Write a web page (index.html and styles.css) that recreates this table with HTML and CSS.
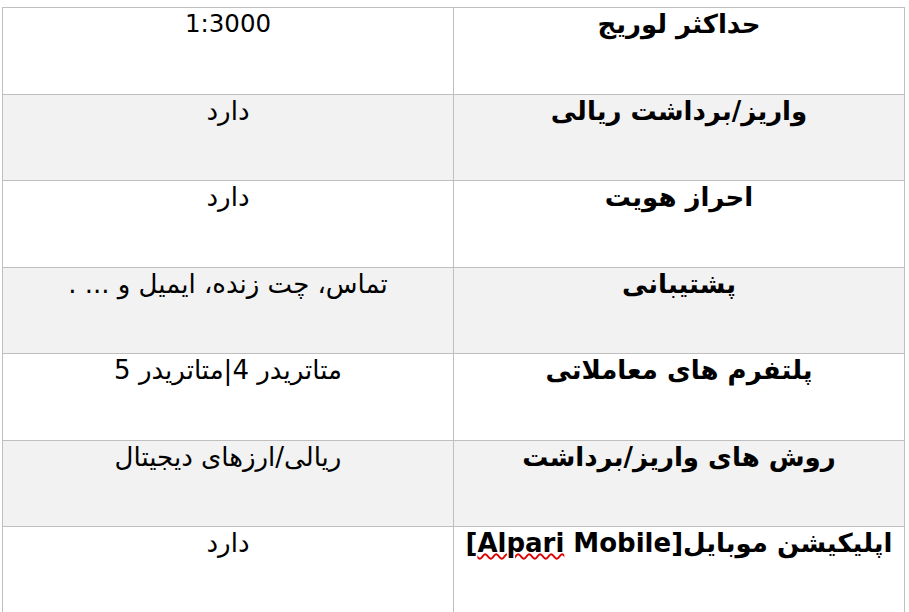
FILE: index.html
```html
<!DOCTYPE html>
<html lang="fa" dir="rtl">
<head>
<meta charset="utf-8">
<link rel="stylesheet" href="styles.css">
</head>
<body>
<table class="spec">
<tbody>
<tr class="row"><td class="label">حداکثر لوریج</td><td class="value latin">1:3000</td></tr>
<tr class="row alt"><td class="label">واریز/برداشت ریالی</td><td class="value">دارد</td></tr>
<tr class="row"><td class="label">احراز هویت</td><td class="value">دارد</td></tr>
<tr class="row alt"><td class="label">پشتیبانی</td><td class="value">تماس، چت زنده، ایمیل و ... .</td></tr>
<tr class="row"><td class="label">پلتفرم های معاملاتی</td><td class="value">متاتریدر 4|متاتریدر 5</td></tr>
<tr class="row alt"><td class="label">روش های واریز/برداشت</td><td class="value">ریالی/ارزهای دیجیتال</td></tr>
<tr class="row"><td class="label">اپلیکیشن موبایل[<span class="spell">Alpari</span> Mobile]</td><td class="value">دارد</td></tr>
</tbody>
</table>
</body>
</html>
```
FILE: styles.css
```css
html, body {
  margin: 0;
  padding: 0;
  background: #ffffff;
}
body {
  padding: 7px 4px 0 3px;
  font-family: "DejaVu Sans", "Noto Sans", sans-serif;
  color: #000;
}
.spec {
  border-collapse: collapse;
  width: 903px;
  table-layout: fixed;
}
.row td {
  border: 1px solid #bfbfbf;
  height: 86.5px;
  box-sizing: border-box;
  vertical-align: top;
  text-align: center;
  padding: 0 6px;
  font-size: 26px;
  line-height: 32px;
  width: 50%;
  white-space: nowrap;
}
.row.alt td {
  background: #f2f2f2;
}
.label {
  font-weight: bold;
}
.value.latin {
  font-size: 24.5px;
}
.spell {
  text-decoration: underline wavy #e00000;
  text-decoration-thickness: 1.5px;
  text-underline-offset: 1px;
}
```
